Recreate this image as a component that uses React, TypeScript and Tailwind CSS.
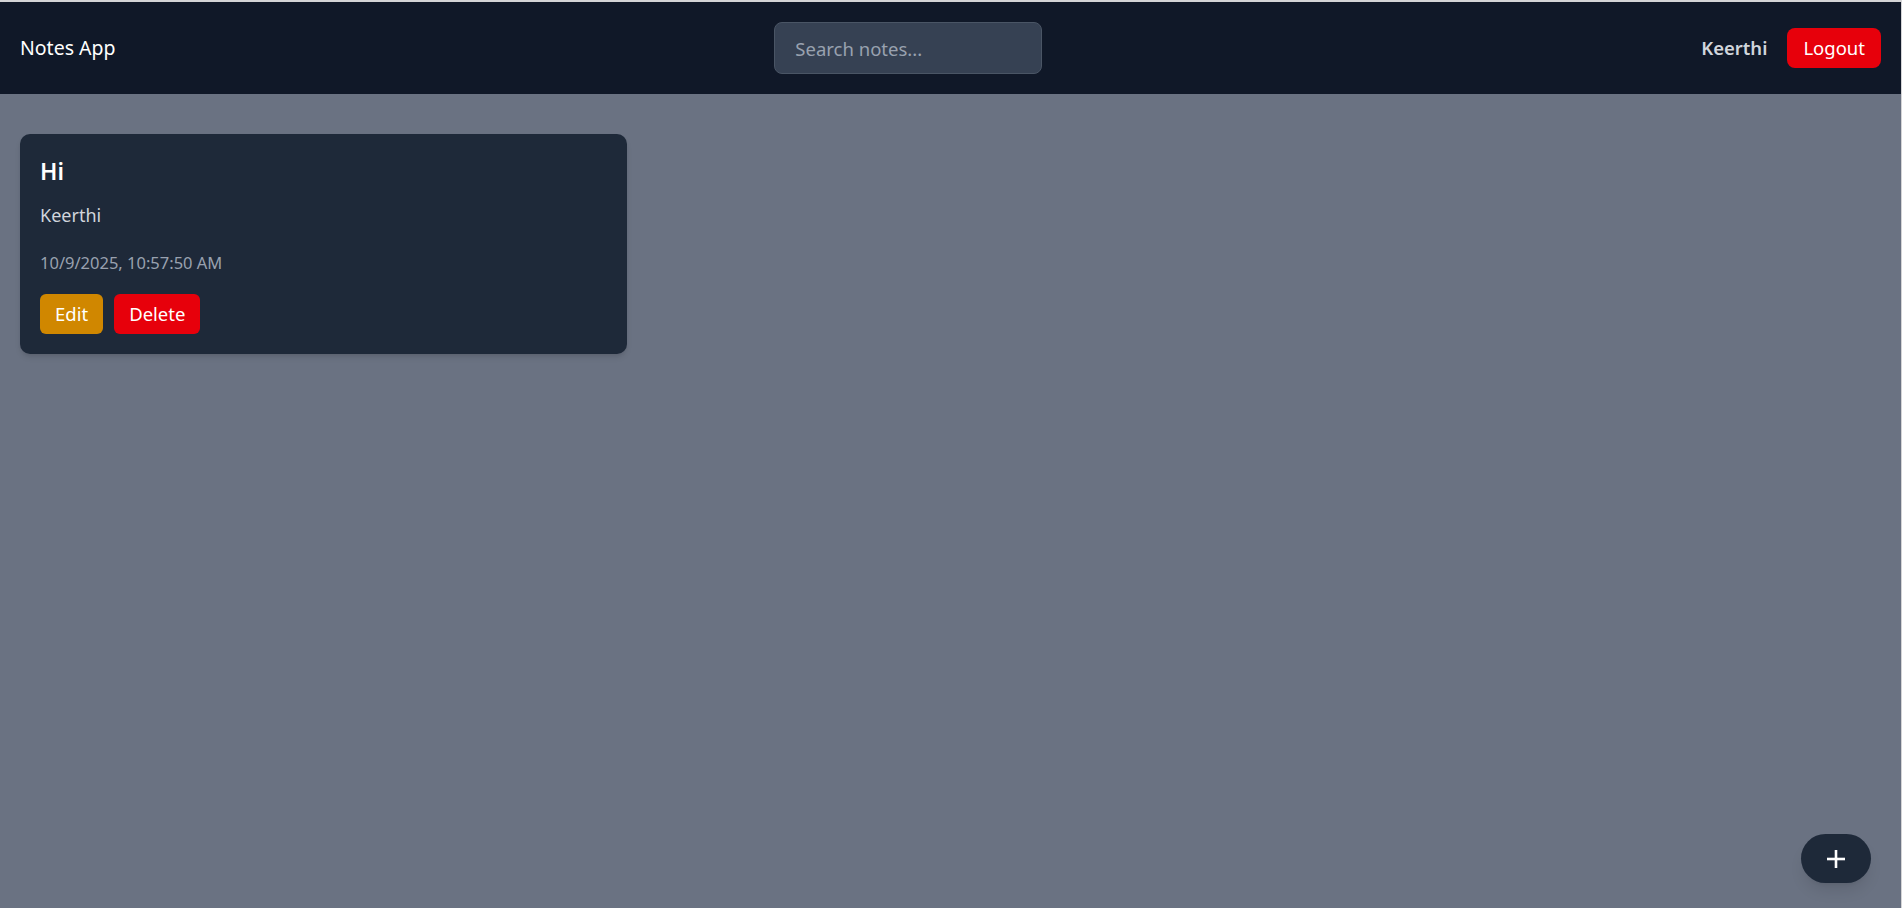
import React from 'react';

type Note = { id: number; title: string; body: string; updatedAt: string };

const notes: Note[] = [
  { id: 1, title: 'Hi', body: 'Keerthi', updatedAt: '10/9/2025, 10:57:50 AM' },
];

function NoteCard({ note }: { note: Note }) {
  return (
    <div className="bg-gray-800 rounded-[10px] p-[20px] shadow-md">
      <h2 className="text-[23px] leading-[35px] font-semibold text-white">{note.title}</h2>
      <p className="mt-[11px] text-[18px] leading-[30px] text-gray-300">{note.body}</p>
      <p className="mt-[20px] text-[16.5px] leading-[25px] text-gray-400">{note.updatedAt}</p>
      <div className="mt-[19px] flex items-center gap-[11px]">
        <button className="h-[40px] px-[15px] rounded-[6px] bg-yellow-600 text-white text-[18.5px]">Edit</button>
        <button className="h-[40px] px-[15px] rounded-[6px] bg-red-600 text-white text-[18.5px]">Delete</button>
      </div>
    </div>
  );
}

export default function App() {
  return (
    <div
      className="min-h-screen bg-gray-500 border-t-2 border-r border-[#d4d4d6]"
      style={{ fontFamily: '"Noto Sans", "Open Sans", sans-serif' }}
    >
      {/* Navbar */}
      <nav className="h-[92px] bg-gray-900 px-[20px] flex items-center justify-between">
        <span className="text-white text-[19.5px]">Notes App</span>
        <input
          type="text"
          placeholder="Search notes..."
          className="w-[268px] h-[52px] px-[20px] rounded-[8px] bg-gray-700 border border-gray-600 text-white text-[18.5px] placeholder:text-gray-400 outline-none"
        />
        <div className="flex items-center gap-[20px]">
          <span className="text-gray-300 font-semibold text-[18.5px]">Keerthi</span>
          <button className="h-[40px] px-[16px] rounded-[8px] bg-red-600 text-white text-[18.5px]">Logout</button>
        </div>
      </nav>

      {/* Notes grid */}
      <main className="px-[20px] pt-[40px] pb-[20px] grid grid-cols-3 gap-[20px] items-start">
        {notes.map((n) => (
          <NoteCard key={n.id} note={n} />
        ))}
      </main>

      {/* Add note */}
      <button className="fixed bottom-[25px] right-[31px] w-[70px] h-[49px] rounded-full bg-gray-800 shadow-lg flex items-center justify-center">
        <svg width="20" height="20" viewBox="0 0 20 20" fill="none" stroke="white" strokeWidth="2.6" strokeLinecap="butt">
          <line x1="10" y1="1" x2="10" y2="19" />
          <line x1="1" y1="10" x2="19" y2="10" />
        </svg>
      </button>
    </div>
  );
}
